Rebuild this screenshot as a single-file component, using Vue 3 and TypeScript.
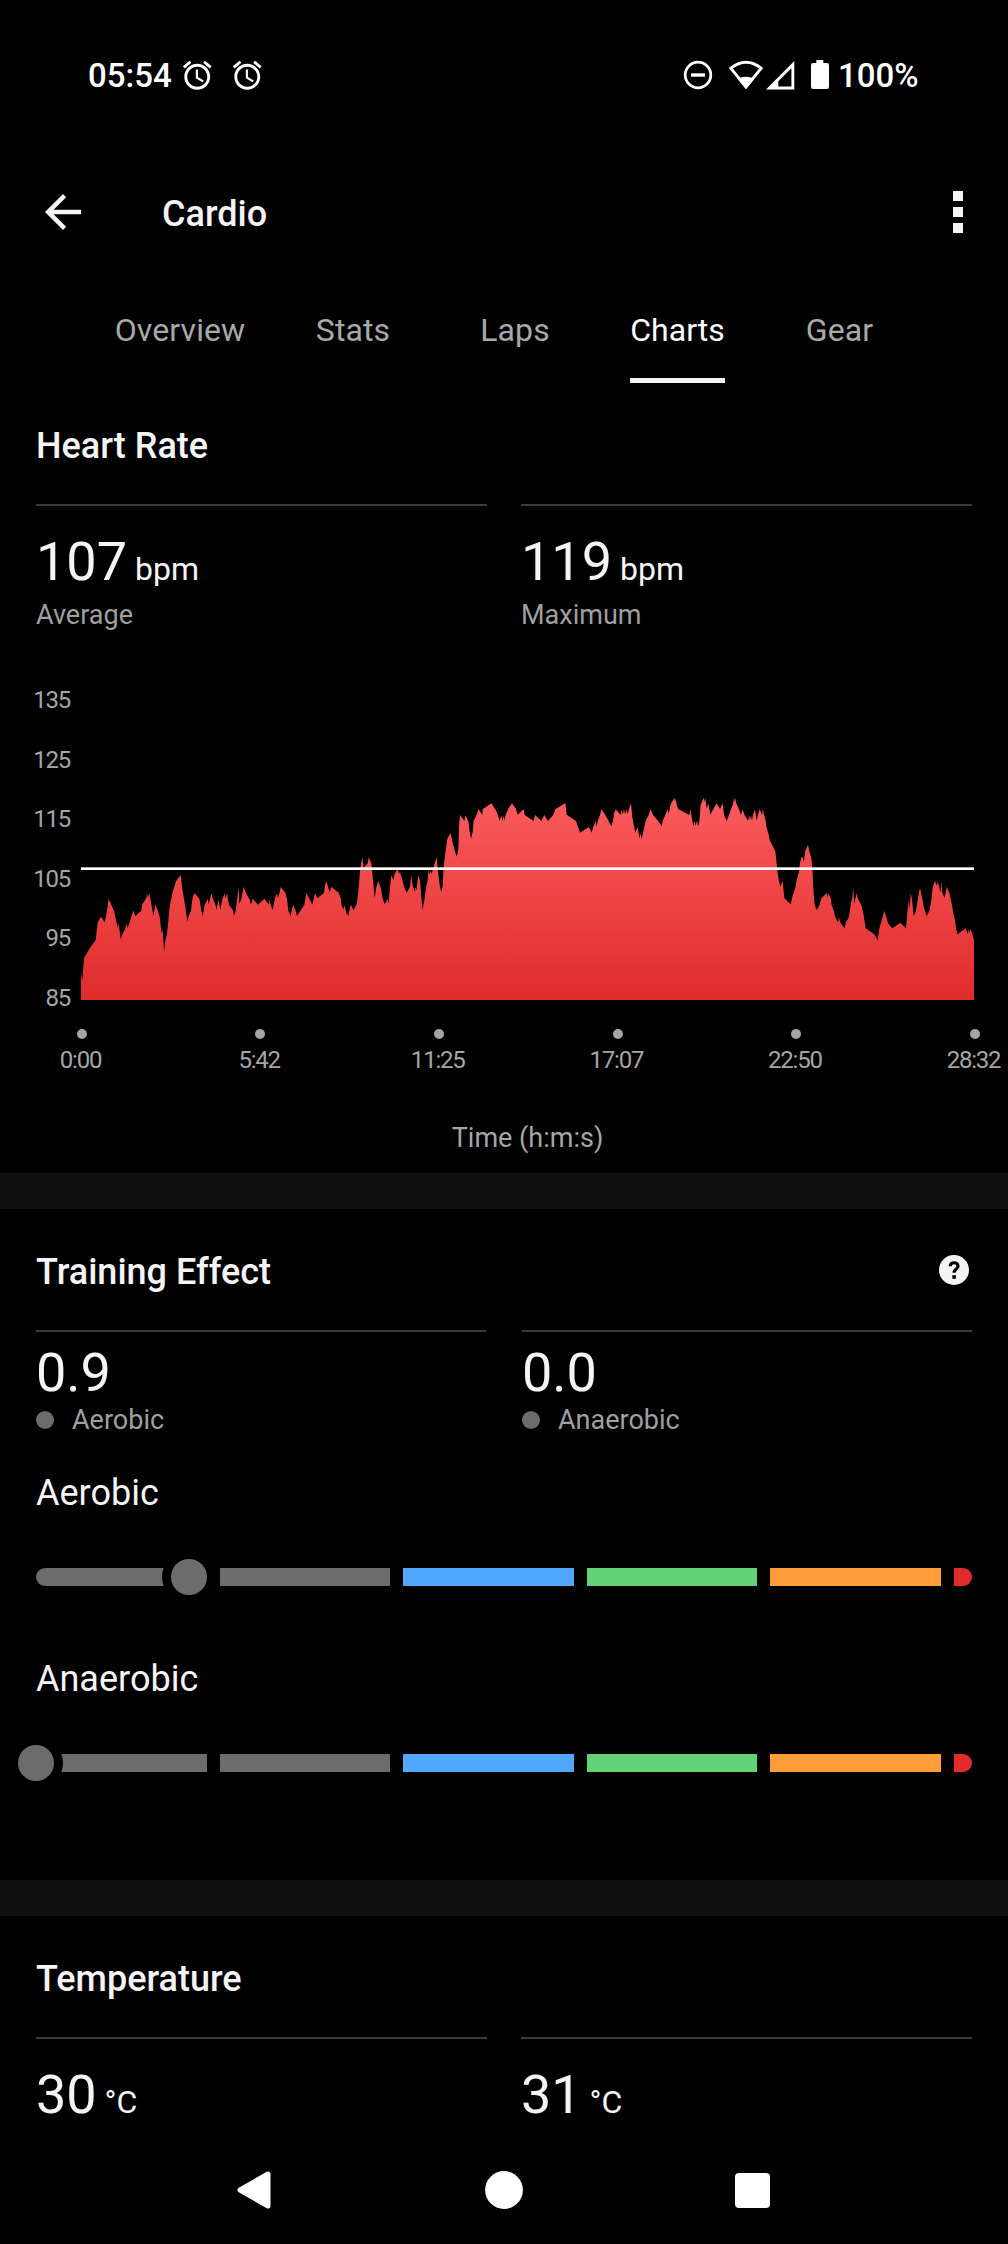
<script setup lang="ts">
interface Metric {
  value: string
  unit?: string
  label?: string
}

interface Effect {
  name: string
  thumb: number
}

const tabs: string[] = ['Overview', 'Stats', 'Laps', 'Charts', 'Gear']
const activeTab = 'Charts'

const heartRate: Metric[] = [
  { value: '107', unit: 'bpm', label: 'Average' },
  { value: '119', unit: 'bpm', label: 'Maximum' },
]
const training: Metric[] = [
  { value: '0.9', label: 'Aerobic' },
  { value: '0.0', label: 'Anaerobic' },
]
const temperature: Metric[] = [
  { value: '30', unit: '°C' },
  { value: '31', unit: '°C' },
]

const effects: Effect[] = [
  { name: 'Aerobic', thumb: 153 },
  { name: 'Anaerobic', thumb: 0 },
]
const zones: string[] = ['base', 'base', 'blue', 'green', 'orange', 'red']

const yTicks: number[] = [135, 125, 115, 105, 95, 85]
const xTicks: string[] = ['0:00', '5:42', '11:25', '17:07', '22:50', '28:32']

// Heart rate trace in three stretches; x is relative to each stretch's offset.
const stretches: { offset: number; points: string }[] = [
  {
    offset: 0,
    points:
      '63,575 67,603 72,535 92,500 107,481 113,427 123,410 134,427 139,405 146,357 152,370 162,392 173,443 176,430 182,478 187,463 196,446 199,430 203,444 220,392 226,408 244,392 247,373 259,355 261,340 264,353 268,340 274,373 280,408 286,375 292,387 299,410 305,461 308,447 312,514 316,480 321,463 329,380 337,340 348,304 362,285 367,327 376,380 382,425 386,407 393,392 397,357 403,339 418,356 424,392 428,408 434,375 443,357 446,373 454,340 459,357 466,373 470,389 475,358 481,389 487,358 494,341 497,355 501,340 506,373 519,391 522,408 527,392 536,322 538,372 544,357 551,321 559,341 569,359 573,374 578,356 594,374 613,356 627,374 629,358 632,374 638,391 645,354 651,340 654,355 659,337 662,321 676,338 681,357 685,392 692,408 699,374 706,390 711,408 733,374 739,339 757,374 765,339 772,355 792,339 795,316 800,304 804,322 809,337 814,321 836,338 842,354 845,376 850,389 853,376 862,408 863,398 865,408 872,374 881,391 888,376',
  },
  {
    offset: 810,
    points:
      '80,374 85,333 91,263 97,232 101,264 113,250 116,232 124,250 129,300 134,354 139,322 144,303 152,322 158,356 164,373 173,357 176,371 180,322 184,286 190,300 194,282 203,266 207,282 210,276 217,300 222,320 230,338 240,320 244,286 248,318 254,336 257,320 259,333 265,285 270,302 274,350 277,390 283,362 287,330 293,300 296,268 299,284 302,272 305,282 310,262 320,231 323,268 330,322 334,336 338,318 341,262 345,225 352,176 362,159 368,190 380,230 385,210 387,140 390,105 403,123 406,106 415,124 419,156 423,176 428,156 431,122 440,104 446,87 455,103 457,104 458,88 484,70 497,89 504,106 509,123 514,106 518,124 520,106 523,121 527,104 535,86 546,70 558,87 563,104 581,88 584,105 611,123 615,105 634,123 643,105 654,123 669,106 676,88 706,69 710,104 738,123 750,158 777,141 785,158 790,141 797,123 800,140 804,121 810,105',
  },
  {
    offset: 1620,
    points:
      '4,88 16,105 34,139 39,123 42,100 47,88 62,105 65,88 67,104 70,88 72,103 75,88 77,103 80,88 83,103 87,86 93,70 97,112 103,143 106,158 113,142 116,160 119,176 121,160 125,176 131,150 137,122 146,105 152,87 159,105 174,122 185,139 188,122 196,105 203,88 206,102 212,73 223,53 225,66 227,54 230,75 235,88 268,105 271,88 275,110 280,139 284,122 287,139 289,122 292,139 293,122 296,139 299,115 302,75 311,53 314,66 316,54 320,86 325,70 331,104 340,87 350,70 360,87 368,70 372,104 380,123 391,94 399,72 402,54 404,66 406,53 408,68 417,88 423,104 428,88 433,104 444,122 448,106 450,121 453,106 456,122 459,104 465,88 467,104 470,122 474,104 479,88 486,105 489,88 492,104 497,122 499,140 505,160 509,180 518,198 526,214 529,242 533,280 537,304 541,320 548,303 553,355 572,373 577,350 586,323 590,300 597,275 600,250 604,232 608,231 611,247 616,212 624,195 628,214 634,235 637,270 641,340 644,375 650,391 659,374 664,355 681,339 683,354 685,339 692,355 695,375 701,391 706,411 714,427 717,411 720,427 734,445 737,428 747,410 752,375 757,350 760,322 762,371 766,357 770,339 774,357 784,375 790,400 797,445 822,462 833,480 838,445 847,415 853,393 858,408 864,430 877,445 901,428 918,445 922,400 927,357 929,389 932,339 936,357 941,409 948,392 954,355 960,322 963,340 967,355 971,380 980,409 989,390 994,360 998,322 1005,303 1011,318 1013,304 1022,338 1025,303 1027,338 1034,354 1040,321 1048,338 1054,365 1060,400 1065,420 1068,445 1073,463 1097,445 1103,463 1106,447 1108,459 1111,447 1116,459 1122,480',
  },
]

const trace: string = stretches
  .map(({ offset, points }) =>
    points
      .split(' ')
      .map((pair) => {
        const [x, y] = pair.split(',').map(Number)
        return `${x + offset},${y}`
      })
      .join(' '),
  )
  .join(' ')
const area = `63,660 ${trace} 2742,660`
</script>

<template>
  <div class="screen">
    <header class="status">
      <span class="clock">05:54</span>
      <svg v-for="n in 2" :key="n" class="alarm" viewBox="0 0 24 24">
        <path
          fill="#fff"
          d="M22 5.72l-4.6-3.86-1.29 1.53 4.6 3.86L22 5.72zM7.88 3.39L6.6 1.86 2 5.71l1.29 1.53 4.59-3.85zM12.5 8H11v6l4.75 2.85.75-1.23-4-2.37V8zM12 4c-4.97 0-9 4.03-9 9s4.02 9 9 9 9-4.03 9-9-4.03-9-9-9zm0 16c-3.87 0-7-3.13-7-7s3.13-7 7-7 7 3.13 7 7-3.13 7-7 7z"
        />
      </svg>
      <span class="grow"></span>
      <svg class="sys" width="148" height="32" viewBox="683 59 148 32">
        <circle cx="698" cy="75" r="12.8" fill="none" stroke="#fff" stroke-width="2.7" />
        <path d="M691 75h14" stroke="#fff" stroke-width="3.4" />
        <path
          d="M730.8 68.2Q746 56.4 761.2 68.2L746 87Z"
          fill="none"
          stroke="#fff"
          stroke-width="2.8"
        />
        <path d="M746 89L737.6 78.8Q746 74.6 754.4 78.8Z" fill="#fff" />
        <path
          fill="#fff"
          fill-rule="evenodd"
          d="M766 89.5L794.3 61V89.5ZM791.4 68.3L778.3 81.3V86.4H791.4Z"
        />
        <path
          fill="#fff"
          d="M816.3 60h7v3h3.7q2 0 2 2v22q0 2-2 2h-14q-2 0-2-2v-22q0-2 2-2h3.3z"
        />
      </svg>
      <span class="battery">100%</span>
    </header>

    <div class="appbar">
      <svg class="back" width="54" height="54" viewBox="0 0 24 24">
        <path fill="#f4f4f4" d="M20 11H7.83l5.59-5.59L12 4l-8 8 8 8 1.41-1.41L7.83 13H20v-2z" />
      </svg>
      <h1>Cardio</h1>
      <span class="grow"></span>
      <div class="more"><i></i><i></i><i></i></div>
    </div>

    <nav class="tabs">
      <div v-for="t in tabs" :key="t" class="tab">
        <span :class="{ active: t === activeTab }">{{ t }}</span>
      </div>
    </nav>

    <section class="heart">
      <h2>Heart Rate</h2>
      <div class="metrics">
        <div v-for="m in heartRate" :key="m.label" class="metric">
          <div class="value">{{ m.value }} <small>{{ m.unit }}</small></div>
          <div class="label">{{ m.label }}</div>
        </div>
      </div>
      <div class="chart">
        <div class="y-axis">
          <span v-for="y in yTicks" :key="y">{{ y }}</span>
        </div>
        <svg class="plot" width="893" height="220" viewBox="63 0 2679 660">
          <defs>
            <linearGradient id="pulse" x1="0" y1="0" x2="0" y2="1">
              <stop offset="0" stop-color="#fb5b5d" />
              <stop offset="1" stop-color="#e02b2b" />
            </linearGradient>
          </defs>
          <polygon :points="area" fill="url(#pulse)" />
          <rect x="63" y="262" width="2679" height="8" fill="#fff" />
        </svg>
      </div>
      <div class="x-axis">
        <div v-for="x in xTicks" :key="x" class="x-tick">
          <i></i>
          <span>{{ x }}</span>
        </div>
      </div>
      <div class="caption">Time (h:m:s)</div>
    </section>

    <div class="band"></div>

    <section class="training">
      <div class="title-row">
        <h2>Training Effect</h2>
        <svg width="30" height="30" viewBox="0 0 30 30">
          <circle cx="15" cy="15" r="15" fill="#f4f4f4" />
          <path
            d="M11.2 11.2C11.2 6.6 19 6.6 19 11.2C19 14.2 15.1 14 15.1 17.8"
            fill="none"
            stroke="#000"
            stroke-width="3.2"
          />
          <rect x="13.3" y="20.2" width="3.6" height="3.6" fill="#000" />
        </svg>
      </div>
      <div class="metrics">
        <div v-for="m in training" :key="m.label" class="metric">
          <div class="value">{{ m.value }}</div>
          <div class="label"><i></i>{{ m.label }}</div>
        </div>
      </div>
      <div v-for="e in effects" :key="e.name" class="effect">
        <h3>{{ e.name }}</h3>
        <div class="gauge">
          <span v-for="(z, i) in zones" :key="i" :class="['zone', z]"></span>
          <i class="thumb" :style="{ left: e.thumb + 'px' }"></i>
        </div>
      </div>
    </section>

    <div class="band"></div>

    <section class="temperature">
      <h2>Temperature</h2>
      <div class="metrics">
        <div v-for="m in temperature" :key="m.value" class="metric">
          <div class="value">{{ m.value }} <small>{{ m.unit }}</small></div>
        </div>
      </div>
    </section>

    <footer class="navbar">
      <svg width="36" height="40" viewBox="0 0 36 40">
        <path d="M32 4V36L4 20Z" fill="#fff" stroke="#fff" stroke-width="5" stroke-linejoin="round" />
      </svg>
      <svg width="38" height="38" viewBox="0 0 38 38">
        <circle cx="19" cy="19" r="18.9" fill="#fff" />
      </svg>
      <svg width="35" height="35" viewBox="0 0 35 35">
        <rect width="35" height="35" rx="4" fill="#fff" />
      </svg>
    </footer>
  </div>
</template>

<style>
body {
  margin: 0;
  background: #000;
}
</style>

<style scoped>
.screen {
  width: 1008px;
  height: 2244px;
  overflow: hidden;
  background: #000;
  color: #f4f4f4;
  font-family: Roboto, 'Liberation Sans', sans-serif;
}
svg {
  display: block;
  flex: none;
}
h1,
h2,
h3 {
  margin: 0;
  font-size: 36px;
  line-height: 48px;
  font-weight: 500;
}
h3 {
  font-weight: 400;
}
.grow {
  flex: 1;
}
.status {
  box-sizing: border-box;
  height: 150px;
  padding: 0 90px 0 88px;
  display: flex;
  align-items: center;
  color: #fff;
  font-size: 33px;
  font-weight: 500;
}
.clock {
  width: 92px;
}
.alarm {
  width: 34.5px;
  height: 34.5px;
  margin-right: 15.5px;
}
.battery {
  width: 80px;
  margin-left: 7px;
}
.appbar {
  height: 124px;
  padding: 0 45px 0 36px;
  display: flex;
  align-items: center;
}
.appbar h1 {
  margin: 3px 0 0 72px;
}
.more {
  display: flex;
  flex-direction: column;
  gap: 6px;
}
.more i {
  width: 10px;
  height: 10px;
  background: #f4f4f4;
}
.tabs {
  box-sizing: border-box;
  height: 109px;
  padding: 36px 0 0 88px;
  display: grid;
  grid-template-columns: 184px 162px 162px 163px 161px;
  font-size: 32px;
  line-height: 40px;
  color: #a8a8a8;
}
.tab {
  display: flex;
  justify-content: center;
}
.tab span {
  padding-bottom: 28px;
  letter-spacing: 0.1px;
}
.tab .active {
  color: #fff;
  letter-spacing: 0;
  border-bottom: 5px solid #f4f4f4;
}
section {
  box-sizing: border-box;
  padding: 39px 36px 0;
}
.heart {
  height: 790px;
}
.training {
  height: 671px;
}
.temperature {
  height: 220px;
}
.band {
  height: 36px;
  background: #101010;
}
.metrics {
  display: flex;
  gap: 34px;
  margin-top: 34px;
}
.training .metrics {
  gap: 36px;
}
.metric {
  flex: 1;
  border-top: 2px solid #3b3b3b;
  padding-top: 24px;
}
.training .metric {
  padding-top: 9px;
}
.value {
  font-size: 54px;
  line-height: 64px;
  height: 64px;
  word-spacing: -5.5px;
}
.value small {
  font-size: 32px;
}
.label {
  margin-top: 3px;
  height: 36px;
  font-size: 27px;
  line-height: 36px;
  color: #9f9f9f;
  display: flex;
  align-items: center;
}
.training .label {
  margin-top: -3px;
}
.label i {
  width: 18px;
  height: 18px;
  margin-right: 18px;
  border-radius: 50%;
  background: #6c6c6c;
}
.chart {
  display: flex;
  margin-top: 38px;
  height: 356px;
}
.y-axis {
  width: 34px;
  margin-right: 11px;
  display: flex;
  flex-direction: column;
  align-items: flex-end;
  font-size: 24px;
  letter-spacing: -1.2px;
  color: #a5a5a5;
}
.y-axis span {
  height: 59.6px;
  line-height: 59.6px;
}
.plot {
  margin-top: 109px;
}
.x-axis {
  display: flex;
  width: 1072px;
  margin: 2px 0 0 -43.5px;
}
.x-tick {
  width: 178.6px;
  display: flex;
  flex-direction: column;
  align-items: center;
  gap: 7px;
  font-size: 24px;
  line-height: 28px;
  letter-spacing: -1.2px;
  color: #a5a5a5;
}
.x-tick span {
  margin-right: 2.5px;
}
.x-tick i {
  width: 10px;
  height: 10px;
  border-radius: 50%;
  background: #a5a5a5;
}
.caption {
  margin: 46px 0 0 45px;
  width: 893px;
  text-align: center;
  font-size: 27px;
  line-height: 36px;
  color: #a5a5a5;
}
.title-row {
  display: flex;
  justify-content: space-between;
  padding-right: 3px;
}
.title-row svg {
  margin-top: 7px;
}
.effect {
  padding-top: 31px;
  height: 155px;
}
.gauge {
  position: relative;
  display: flex;
  gap: 13px;
  height: 18px;
  margin-top: 51px;
}
.zone {
  flex: 1;
  background: #6c6c6c;
}
.zone:first-child {
  border-radius: 9px 0 0 9px;
}
.zone.blue {
  background: #52a7ff;
}
.zone.green {
  background: #62d377;
}
.zone.orange {
  background: #ff9e39;
}
.zone.red {
  flex: none;
  width: 18px;
  background: #e22b2d;
  border-radius: 0 9px 9px 0;
}
/* Marker sits over the gauge and masks a ring of it. */
.thumb {
  position: absolute;
  top: -9px;
  width: 36px;
  height: 36px;
  margin-left: -18px;
  border-radius: 50%;
  background: #6c6c6c;
  box-shadow: 0 0 0 9px #000;
}
.navbar {
  box-sizing: border-box;
  height: 108px;
  padding: 0 238px 0 236px;
  display: flex;
  align-items: center;
  justify-content: space-between;
  background: #020202;
}
</style>
